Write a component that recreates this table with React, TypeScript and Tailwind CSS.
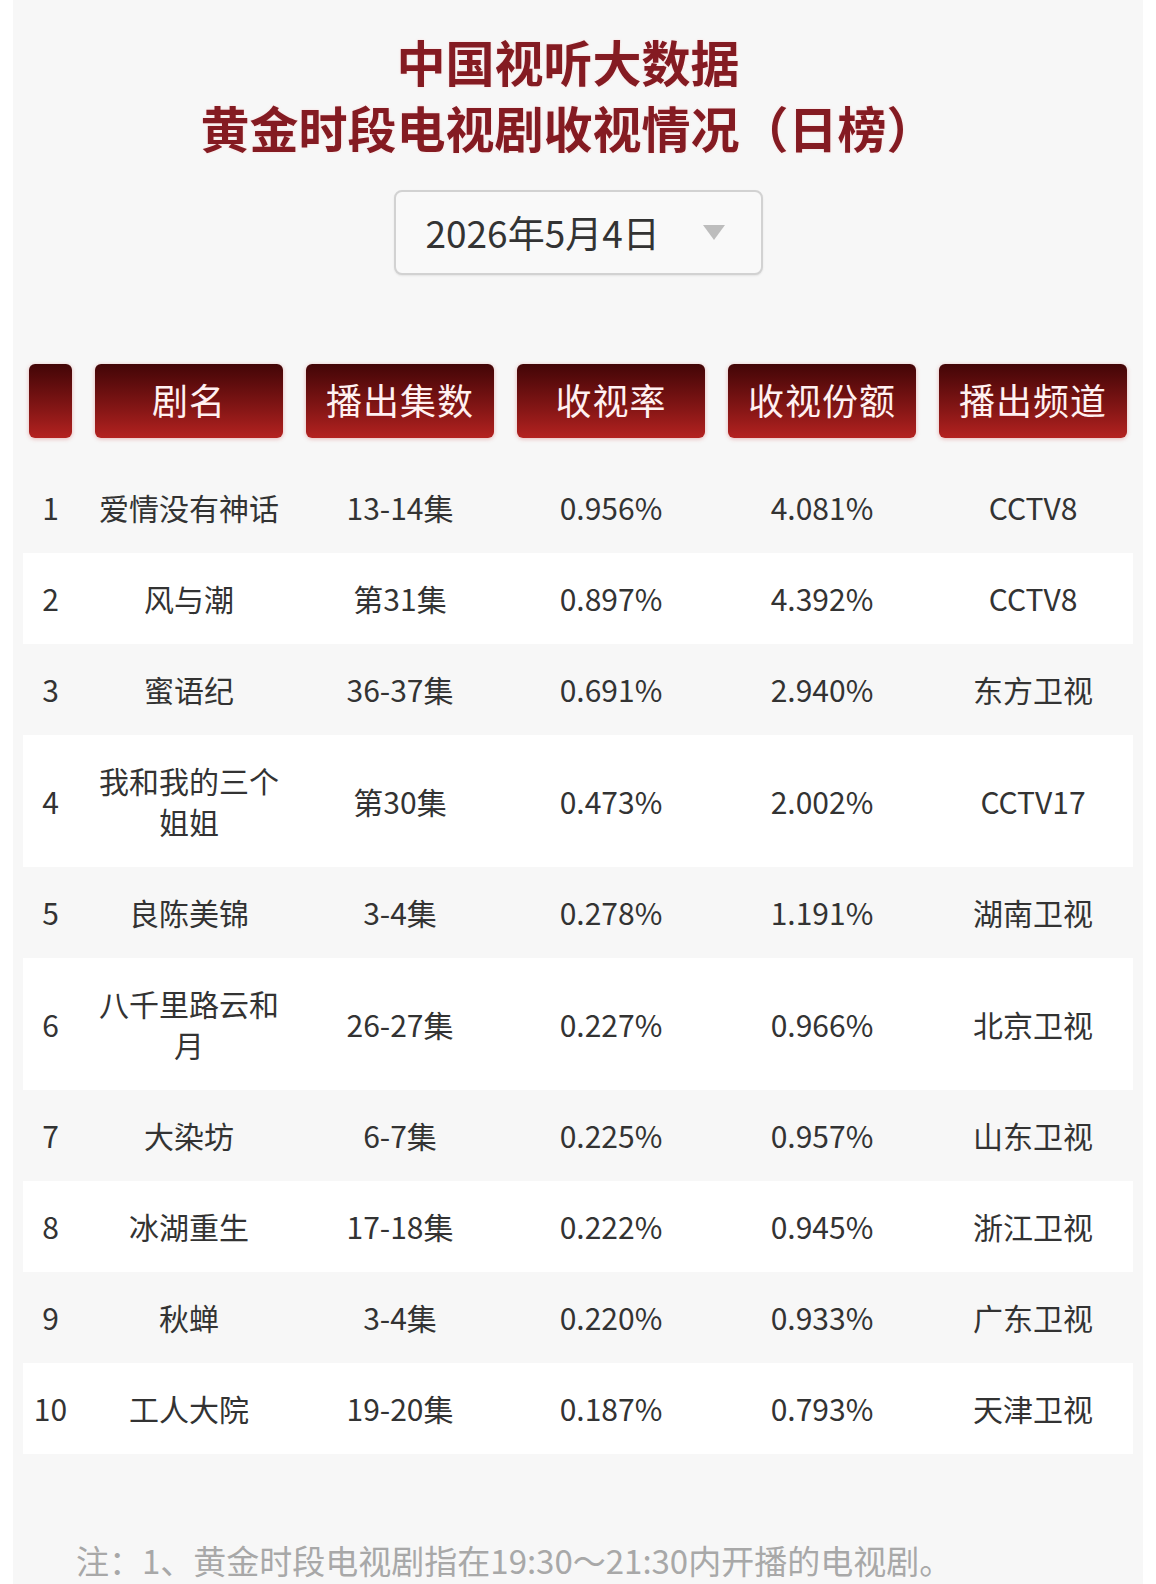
const rows = [
  { rank: '1', name: '爱情没有神话', ep: '13-14集', rating: '0.956%', share: '4.081%', channel: 'CCTV8' },
  { rank: '2', name: '风与潮', ep: '第31集', rating: '0.897%', share: '4.392%', channel: 'CCTV8' },
  { rank: '3', name: '蜜语纪', ep: '36-37集', rating: '0.691%', share: '2.940%', channel: '东方卫视' },
  { rank: '4', name: '我和我的三个姐姐', ep: '第30集', rating: '0.473%', share: '2.002%', channel: 'CCTV17' },
  { rank: '5', name: '良陈美锦', ep: '3-4集', rating: '0.278%', share: '1.191%', channel: '湖南卫视' },
  { rank: '6', name: '八千里路云和月', ep: '26-27集', rating: '0.227%', share: '0.966%', channel: '北京卫视' },
  { rank: '7', name: '大染坊', ep: '6-7集', rating: '0.225%', share: '0.957%', channel: '山东卫视' },
  { rank: '8', name: '冰湖重生', ep: '17-18集', rating: '0.222%', share: '0.945%', channel: '浙江卫视' },
  { rank: '9', name: '秋蝉', ep: '3-4集', rating: '0.220%', share: '0.933%', channel: '广东卫视' },
  { rank: '10', name: '工人大院', ep: '19-20集', rating: '0.187%', share: '0.793%', channel: '天津卫视' },
];

const headers = ['', '剧名', '播出集数', '收视率', '收视份额', '播出频道'];

export default function App() {
  return (
    <div className="h-[1584px] overflow-hidden bg-white px-[13px] font-['Noto_Sans_CJK_SC',sans-serif]">
      <div className="h-full bg-[#f7f7f7] pt-[28px]">
        <h1 className="pr-[20px] text-center text-[49px] font-bold leading-[66px] text-[#841b22] [text-shadow:0_0_2px_rgba(255,180,180,0.5)]">
          <div>中国视听大数据</div>
          <div>黄金时段电视剧收视情况（日榜）</div>
        </h1>

        <div className="mt-[30px] flex justify-center">
          <div className="flex h-[85px] w-[369px] items-center rounded-lg border-2 border-[#d2d2d2] bg-[#f9f9f9] pl-[30px] pr-[36px] shadow-[0_1px_2px_rgba(0,0,0,0.08)]">
            <span className="text-[37px] leading-none text-[#333]">2026年5月4日</span>
            <svg className="ml-auto" width="22" height="15" viewBox="0 0 22 15">
              <polygon points="0,0 22,0 11,15" fill="#bdbdbd" />
            </svg>
          </div>
        </div>

        <div className="ml-[16px] mt-[89px] grid grid-cols-[43px_repeat(5,188px)] gap-x-[23px]">
          {headers.map((h, i) => (
            <div
              key={i}
              className="flex h-[74px] items-center justify-center rounded-md bg-gradient-to-b from-[#430607] to-[#b42220] pb-[4px] text-[36px] tracking-[1px] text-[#fff1f1] shadow-[0_1px_4px_rgba(200,60,60,0.35)]"
            >
              {h}
            </div>
          ))}
        </div>

        <div className="mx-[10px] mt-[24px]">
          {rows.map((r, i) => (
            <div
              key={r.rank}
              className={`grid grid-cols-[43px_repeat(5,188px)] items-center gap-x-[23px] py-[25px] pl-[6px] text-center text-[30px] leading-[41px] text-[#333] ${i % 2 === 1 ? 'bg-white' : ''}`}
            >
              <div>{r.rank}</div>
              <div>{r.name}</div>
              <div>{r.ep}</div>
              <div>{r.rating}</div>
              <div>{r.share}</div>
              <div>{r.channel}</div>
            </div>
          ))}
        </div>

        <p className="mt-[86px] whitespace-nowrap pl-[63px] text-[33px] leading-[40px] text-[#a8a8a8]">
          注：1、黄金时段电视剧指在19:30～21:30内开播的电视剧。
        </p>
      </div>
    </div>
  );
}
